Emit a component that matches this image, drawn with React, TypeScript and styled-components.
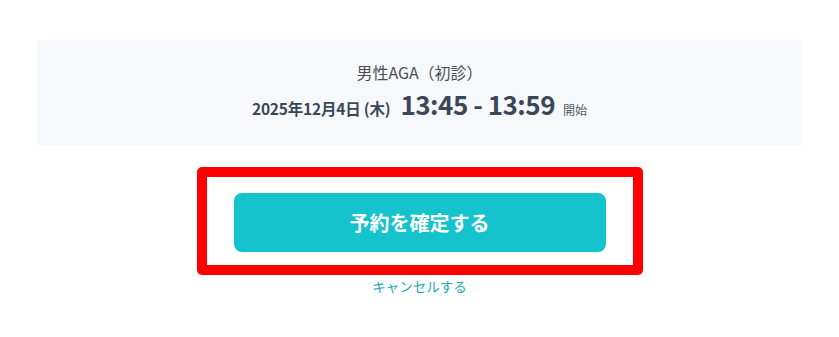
import { FunctionComponent } from "react";
import styled, { createGlobalStyle } from "styled-components";

const GlobalStyle = createGlobalStyle`
  html, body {
    margin: 0;
    padding: 0;
    background: #ffffff;
    font-family: "Noto Sans CJK JP", "Noto Sans", sans-serif;
  }
`;

const Page = styled.div`
  width: 839px;
  padding: 40px 37px 0;
  box-sizing: border-box;
  display: flex;
  flex-direction: column;
  align-items: center;
`;

const Summary = styled.section`
  width: 100%;
  height: 105px;
  box-sizing: border-box;
  background-color: #f7f8fb;
  display: flex;
  flex-direction: column;
  align-items: center;
  justify-content: center;
  gap: 5px;
  padding-top: 2px;
`;

const MenuName = styled.div`
  font-size: 16px;
  color: #4a4f57;
  line-height: 22px;
`;

const DateRow = styled.div`
  display: flex;
  align-items: baseline;
  color: #3a4758;
  line-height: 32px;
`;

const DateText = styled.span`
  font-size: 15.5px;
  font-weight: 700;
  letter-spacing: -0.2px;
`;

const TimeText = styled.span`
  font-size: 26px;
  font-weight: 700;
  letter-spacing: -0.5px;
  margin-left: 10px;
`;

const StartLabel = styled.span`
  font-size: 12px;
  color: #555b63;
  margin-left: 8px;
`;

const Highlight = styled.div`
  margin-top: 22px;
  border: 10px solid #ff0000;
  border-radius: 5px;
  padding: 16px 27px 13px;
`;

const ConfirmButton = styled.button`
  width: 372px;
  height: 59px;
  border: none;
  border-radius: 8px;
  background-color: #14c3cc;
  color: #ffffff;
  font-family: inherit;
  font-size: 20px;
  font-weight: 700;
  cursor: pointer;
`;

const CancelLink = styled.a`
  margin-top: 1px;
  font-size: 13.5px;
  color: #1aa9b8;
  text-decoration: none;
  line-height: 20px;
  cursor: pointer;
`;

const App: FunctionComponent = () => {
  return (
    <>
      <GlobalStyle />
      <Page>
        <Summary>
          <MenuName>男性AGA（初診）</MenuName>
          <DateRow>
            <DateText>2025年12月4日 (木)</DateText>
            <TimeText>13:45 - 13:59</TimeText>
            <StartLabel>開始</StartLabel>
          </DateRow>
        </Summary>
        <Highlight>
          <ConfirmButton>予約を確定する</ConfirmButton>
        </Highlight>
        <CancelLink>キャンセルする</CancelLink>
      </Page>
    </>
  );
};

export default App;
